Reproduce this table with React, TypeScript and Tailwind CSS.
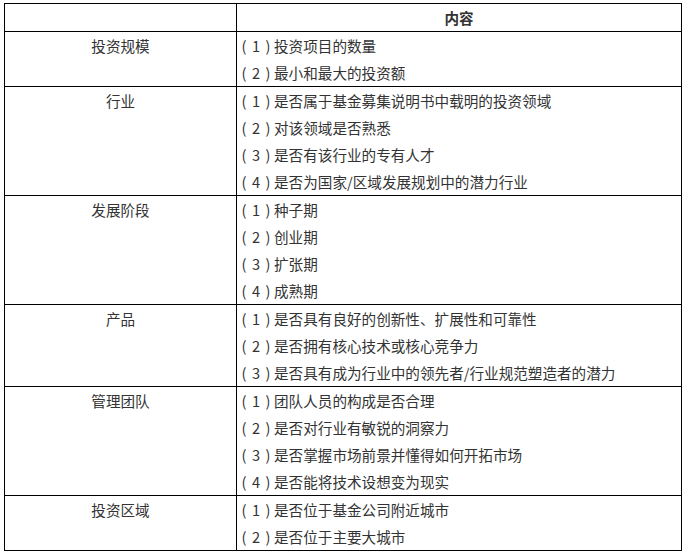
import React from "react";

const rows: { label: string; items: string[] }[] = [
  { label: "投资规模", items: ["投资项目的数量", "最小和最大的投资额"] },
  {
    label: "行业",
    items: [
      "是否属于基金募集说明书中载明的投资领域",
      "对该领域是否熟悉",
      "是否有该行业的专有人才",
      "是否为国家/区域发展规划中的潜力行业",
    ],
  },
  { label: "发展阶段", items: ["种子期", "创业期", "扩张期", "成熟期"] },
  {
    label: "产品",
    items: [
      "是否具有良好的创新性、扩展性和可靠性",
      "是否拥有核心技术或核心竞争力",
      "是否具有成为行业中的领先者/行业规范塑造者的潜力",
    ],
  },
  {
    label: "管理团队",
    items: [
      "团队人员的构成是否合理",
      "是否对行业有敏锐的洞察力",
      "是否掌握市场前景并懂得如何开拓市场",
      "是否能将技术设想变为现实",
    ],
  },
  { label: "投资区域", items: ["是否位于基金公司附近城市", "是否位于主要大城市"] },
];

export default function App() {
  return (
    <div
      className="w-[686px] h-[557px] bg-white pt-[3px] pl-[4px] text-[14.6px] text-[#333333]"
      style={{ fontFamily: '"Noto Sans CJK SC", "Noto Sans", sans-serif' }}
    >
      <table className="border-collapse w-[677px] table-fixed">
        <colgroup>
          <col className="w-[232px]" />
          <col className="w-[445px]" />
        </colgroup>
        <thead>
          <tr>
            <th className="border border-black p-0 h-[27px] leading-[27px]"></th>
            <th className="border border-black p-0 h-[27px] leading-[27px] font-bold text-center">内容</th>
          </tr>
        </thead>
        <tbody>
          {rows.map((r) => (
            <tr key={r.label}>
              <td className="border border-black p-0 align-top text-center leading-[27px]">
                <div className="h-[27px]">{r.label}</div>
              </td>
              <td className="border border-black p-0 pl-[1px] align-top leading-[27px]">
                {r.items.map((it, i) => (
                  <div key={it} className="flex h-[27px] whitespace-nowrap">
                    <span className="w-[12px] text-center">(</span>
                    <span className="w-[12px] text-center">{i + 1}</span>
                    <span className="w-[12px] text-center">)</span>
                    <span>{it}</span>
                  </div>
                ))}
              </td>
            </tr>
          ))}
        </tbody>
      </table>
    </div>
  );
}
